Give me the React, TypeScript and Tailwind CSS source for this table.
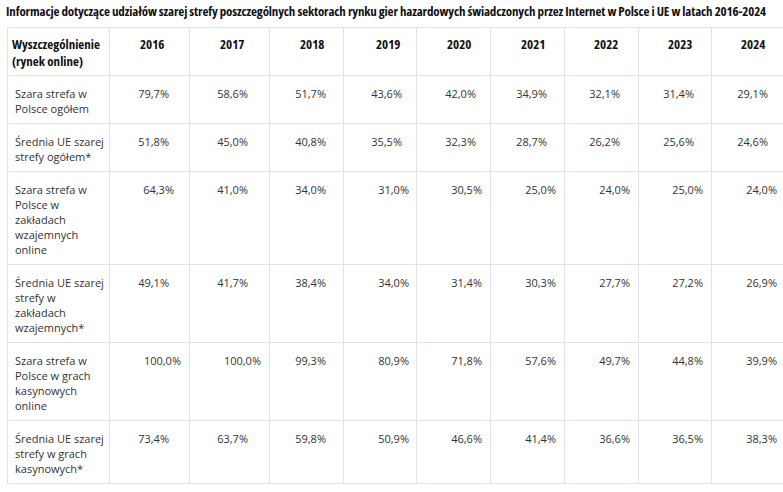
const years = ["2016", "2017", "2018", "2019", "2020", "2021", "2022", "2023", "2024"];

// left padding of each year heading
const headPad = ["pl-[30px]", "pl-[30px]", "pl-[30px]", "pl-[32px]", "pl-[30px]", "pl-[30px]", "pl-[29px]", "pl-[29px]", "pl-[29px]"];

const rows = [
  {
    label: "Szara strefa w Polsce ogółem",
    values: ["79,7%", "58,6%", "51,7%", "43,6%", "42,0%", "34,9%", "32,1%", "31,4%", "29,1%"],
    pads: ["pr-[20px]", "pr-[21px]", "pr-[17px]", "pr-[14px]", "pr-[14px]", "pr-[17px]", "pr-[18px]", "pr-[17px]", "pr-[17px]"],
  },
  {
    label: "Średnia UE szarej strefy ogółem*",
    values: ["51,8%", "45,0%", "40,8%", "35,5%", "32,3%", "28,7%", "26,2%", "25,6%", "24,6%"],
    pads: ["pr-[20px]", "pr-[21px]", "pr-[17px]", "pr-[14px]", "pr-[14px]", "pr-[17px]", "pr-[18px]", "pr-[17px]", "pr-[17px]"],
  },
  {
    label: "Szara strefa w Polsce w zakładach wzajemnych online",
    values: ["64,3%", "41,0%", "34,0%", "31,0%", "30,5%", "25,0%", "24,0%", "25,0%", "24,0%"],
    pads: ["pr-[15px]", "pr-[21px]", "pr-[17px]", "pr-[7px]", "pr-[8px]", "pr-[8px]", "pr-[8px]", "pr-[8px]", "pr-[8px]"],
  },
  {
    label: "Średnia UE szarej strefy w zakładach wzajemnych*",
    values: ["49,1%", "41,7%", "38,4%", "34,0%", "31,4%", "30,3%", "27,7%", "27,2%", "26,9%"],
    pads: ["pr-[20px]", "pr-[21px]", "pr-[17px]", "pr-[7px]", "pr-[8px]", "pr-[8px]", "pr-[8px]", "pr-[8px]", "pr-[8px]"],
  },
  {
    label: "Szara strefa w Polsce w grach kasynowych online",
    values: ["100,0%", "100,0%", "99,3%", "80,9%", "71,8%", "57,6%", "49,7%", "44,8%", "39,9%"],
    pads: ["pr-[8px]", "pr-[8px]", "pr-[17px]", "pr-[7px]", "pr-[8px]", "pr-[8px]", "pr-[8px]", "pr-[8px]", "pr-[8px]"],
  },
  {
    label: "Średnia UE szarej strefy w grach kasynowych*",
    values: ["73,4%", "63,7%", "59,8%", "50,9%", "46,6%", "41,4%", "36,6%", "36,5%", "38,3%"],
    pads: ["pr-[20px]", "pr-[21px]", "pr-[17px]", "pr-[7px]", "pr-[8px]", "pr-[8px]", "pr-[8px]", "pr-[8px]", "pr-[8px]"],
  },
];

export default function App() {
  return (
    <div className="h-[492px] w-[783px] overflow-hidden bg-white font-['Open_Sans',sans-serif] text-[#333]">
      {/* Title */}
      <h1 className="pl-[6px] pt-[3px] text-[13px] leading-[17px] font-bold font-stretch-condensed tracking-[-0.15px] whitespace-nowrap text-[#111]">
        Informacje dotyczące udziałów szarej strefy poszczególnych sektorach rynku gier hazardowych świadczonych przez Internet w Polsce i UE w latach 2016-2024
      </h1>

      {/* Table */}
      <div className="ml-[7px] mt-[7px] grid w-[779px] grid-cols-[102px_80px_80px_74px_73px_74px_74px_74px_73px_74px] border-t border-l border-[#dfe2e7]">
        <div className="border-r border-b border-[#dfe2e7] pl-[4px] pt-[8px] pb-[5px] text-[13px] leading-[17px] font-bold font-stretch-condensed text-[#111]">
          Wyszczególnienie (rynek online)
        </div>
        {years.map((y, i) => (
          <div
            key={y}
            className={`border-r border-b border-[#dfe2e7] pt-[8px] pb-[5px] text-[13px] leading-[17px] font-bold font-stretch-condensed text-[#111] ${headPad[i]}`}>
            {y}
          </div>
        ))}

        {rows.map((row) => (
          <>
            <div
              key={row.label}
              className="border-r border-b border-[#dfe2e7] pl-[7px] pr-[4px] pt-[10px] pb-[7px] text-[11px] leading-[15px]">
              {row.label}
            </div>
            {row.values.map((v, i) => (
              <div
                key={row.label + i}
                className={`border-r border-b border-[#dfe2e7] pt-[10px] pb-[7px] text-right text-[11px] leading-[15px] ${row.pads[i]}`}>
                {v}
              </div>
            ))}
          </>
        ))}
      </div>
    </div>
  );
}
